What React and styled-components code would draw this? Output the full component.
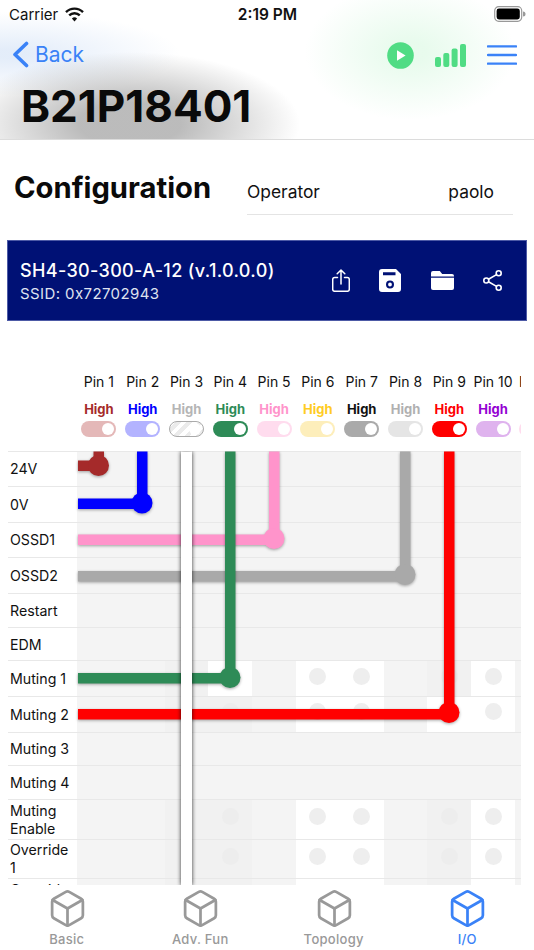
import React from 'react'
import styled, { createGlobalStyle } from 'styled-components'
import { Box } from 'lucide-react'

const GlobalStyle = createGlobalStyle`
  html, body {
    margin: 0;
    padding: 0;
    background: #fff;
    font-family: Inter, "Liberation Sans", sans-serif;
    color: #111;
  }
  * {
    box-sizing: border-box;
  }
`

const BLUE = '#3a82f7'
const GREEN = '#50dc84'
const COL = 43.8

const Page = styled.div`
  width: 534px;
  height: 950px;
  display: flex;
  flex-direction: column;
  overflow: hidden;
  background: #fff;
`

const Main = styled.div`
  flex: 1;
  min-height: 0;
  overflow: hidden;
`

const Header = styled.header`
  height: 140px;
  border-bottom: 1px solid #dcdcdc;
  background:
    radial-gradient(ellipse 170px 72px at 130px 124px, rgba(165, 165, 165, 0.75) 30%, rgba(165, 165, 165, 0) 100%),
    radial-gradient(ellipse 105px 68px at 410px 52px, rgba(200, 245, 212, 0.42) 15%, rgba(200, 245, 212, 0) 100%),
    radial-gradient(ellipse 170px 42px at 10px 54px, rgba(205, 222, 245, 0.55) 10%, rgba(205, 222, 245, 0) 100%),
    #fff;
`

const StatusBar = styled.div`
  height: 28px;
  display: grid;
  grid-template-columns: 1fr auto 1fr;
  align-items: center;
  padding: 0 8px 0 9px;
  font-size: 15px;
`

const Carrier = styled.div`
  display: flex;
  align-items: center;
  gap: 7px;
`

const Clock = styled.div`
  font-size: 15.5px;
  font-weight: 600;
`

const BatteryWrap = styled.div`
  justify-self: end;
  display: flex;
`

const NavRow = styled.div`
  height: 52px;
  display: flex;
  align-items: center;
  padding: 0 17px 0 12px;
`

const BackLink = styled.div`
  display: flex;
  align-items: center;
  gap: 6px;
  color: ${BLUE};
  font-size: 21px;
`

const NavIcons = styled.div`
  margin-left: auto;
  padding-top: 2px;
  display: flex;
  align-items: center;
`

const Title = styled.h1`
  margin: 0 0 0 21px;
  font-size: 44px;
  line-height: 52px;
  font-weight: 700;
  color: #0a0a0a;
`

const ConfigRow = styled.section`
  height: 100px;
  display: flex;
  align-items: flex-start;
  padding-left: 14px;
`

const ConfigTitle = styled.h2`
  margin: 28px 0 0;
  width: 197px;
  font-size: 29.2px;
  line-height: 40px;
  font-weight: 700;
  white-space: nowrap;
  color: #0a0a0a;
`

const Operator = styled.div`
  margin: 35px 0 0 36px;
  width: 266px;
  height: 40px;
  display: flex;
  align-items: center;
  justify-content: space-between;
  padding: 0 19px 7px 0;
  border-bottom: 1px solid #e4e4e4;
  font-size: 17.4px;
  font-weight: 400;
`

const Banner = styled.section`
  margin: 0 7px;
  height: 81px;
  display: flex;
  align-items: center;
  padding: 0 24px 0 12px;
  background: #001175;
  border: 1px solid #4d5aa6;
  color: #fff;
`

const BannerText = styled.div`
  flex: 1;
  padding-top: 3px;
`

const BannerTitle = styled.div`
  font-size: 18px;
  line-height: 24px;
  font-weight: 500;
  letter-spacing: 0.35px;
  white-space: nowrap;
`

const BannerSub = styled.div`
  font-size: 15px;
  line-height: 22px;
  letter-spacing: 0.4px;
  color: #dfe2f0;
`

const BannerIcons = styled.div`
  display: flex;
  align-items: center;
  gap: 29.5px;
`

const PinHead = styled.div`
  margin-left: 8px;
  width: 513px;
  height: 129.5px;
  padding: 52px 0 0 69px;
  display: flex;
  overflow: hidden;
`

const PinCol = styled.div`
  flex: 0 0 ${COL}px;
  display: flex;
  flex-direction: column;
  align-items: center;
`

const PinName = styled.div`
  font-size: 14px;
  line-height: 18px;
  white-space: nowrap;
`

const PinLevel = styled.div`
  margin-top: 9px;
  font-size: 13px;
  line-height: 18px;
  font-weight: 700;
  color: ${(p) => p.$color};
`

const Toggle = styled.div`
  margin-top: 3px;
  width: 35px;
  height: 16px;
  flex: none;
  display: flex;
  align-items: center;
  justify-content: flex-end;
  padding-right: 2px;
  border-radius: 8px;
  background: ${(p) => p.$track};
  ${(p) =>
    p.$disabled &&
    `
    border: 1.5px solid #aaa;
    background: repeating-linear-gradient(135deg, #fff 0 4px, #ebebeb 4px 8px);
  `}
`

const Knob = styled.div`
  width: 12px;
  height: 12px;
  border-radius: 50%;
  background: #fff;
`

const Grid = styled.div`
  position: relative;
  margin-left: 8px;
  width: 513px;
  overflow: hidden;
`

const Row = styled.div`
  height: ${(p) => p.$height}px;
  display: flex;
  border-top: 1.5px solid #e8e8e8;
  background: #f4f4f4;
`

const RowLabel = styled.div`
  flex: 0 0 69px;
  display: flex;
  align-items: center;
  padding: 1px 0 0 2px;
  background: #fff;
  font-size: 14.2px;
  line-height: 18px;
`

const Cell = styled.div`
  flex: 0 0 ${COL}px;
  display: flex;
  align-items: center;
  justify-content: center;
  padding-bottom: 5px;
  background: ${(p) => (p.$tone === 'white' ? '#fff' : p.$tone === 'dim' ? '#f1f1f1' : 'transparent')};
`

const Dot = styled.div`
  width: 17px;
  height: 17px;
  border-radius: 50%;
  background: ${(p) => (p.$tone === 'white' ? '#eeeeee' : '#ededed')};
`

const WireLayer = styled.svg`
  position: absolute;
  left: 0;
  top: 0;
  pointer-events: none;
`

const WireGroup = styled.g`
  filter: drop-shadow(0 1px 1.5px rgba(0, 0, 0, 0.35));
`

const DisabledBar = styled.rect`
  fill: #fff;
  filter: drop-shadow(0 0 2px rgba(0, 0, 0, 0.8));
`

const TabBar = styled.nav`
  height: 65px;
  flex: none;
  display: flex;
  background: #fff;
`

const Tab = styled.div`
  flex: 1;
  display: flex;
  flex-direction: column;
  align-items: center;
  color: ${(p) => (p.$active ? BLUE : '#999')};
  font-size: 13px;
  font-weight: 500;
  letter-spacing: 0.3px;
`

const TabIcon = styled(Box)`
  margin: 3px 0 0 1px;
  height: 41px;
  flex: none;
`

const TabLabel = styled.span`
  line-height: 16px;
  margin-top: 2px;
`

const pins = [
  { name: 'Pin 1', color: '#a52a2a', track: '#e4b8b8' },
  { name: 'Pin 2', color: '#0000ff', track: '#b3b3ff' },
  { name: 'Pin 3', color: '#b5b5b5', disabled: true },
  { name: 'Pin 4', color: '#2e8b57', track: '#2e8b57' },
  { name: 'Pin 5', color: '#ff94cb', track: '#ffdcee' },
  { name: 'Pin 6', color: '#ffcc22', track: '#fdeebb' },
  { name: 'Pin 7', color: '#111111', track: '#aaaaaa' },
  { name: 'Pin 8', color: '#b0b0b0', track: '#e5e5e5' },
  { name: 'Pin 9', color: '#ff0000', track: '#ff0000' },
  { name: 'Pin 10', color: '#9400d3', track: '#dfb3ee' },
  { name: 'Pin 11', color: '#ff94cb', track: '#ffdcee' },
]

// w = white cell, g = dimmed cell, a trailing d means it holds a dot
const safety = { 2: 'g', 3: 'gd', 5: 'wd', 6: 'wd', 8: 'gd', 9: 'wd' }

const rows = [
  { label: '24V', height: 35.5 },
  { label: '0V', height: 35.7 },
  { label: 'OSSD1', height: 35.6 },
  { label: 'OSSD2', height: 36 },
  { label: 'Restart', height: 33.7 },
  { label: 'EDM', height: 33.3 },
  { label: 'Muting 1', height: 35.7, cells: { 2: 'g', 3: 'w', 5: 'wd', 6: 'wd', 8: 'gd', 9: 'wd' } },
  { label: 'Muting 2', height: 35.7, cells: { 2: 'g', 3: 'gd', 5: 'wd', 6: 'wd', 8: 'w', 9: 'wd' } },
  { label: 'Muting 3', height: 33.3 },
  { label: 'Muting 4', height: 34 },
  { label: 'Muting Enable', height: 39.7, cells: safety },
  { label: 'Override 1', height: 39.3, cells: safety },
  { label: 'Override 2', height: 40, cells: safety },
]

// drawn in page coordinates, the layer's viewBox starts at the grid's corner
const wires = [
  { color: '#a52a2a', x: 98.5, fromY: 451, y: 465, dot: [98.5, 465] },
  { color: '#ff94cb', x: 274, fromY: 451, y: 539, dot: [274, 538] },
  { color: '#a9a9a9', x: 405, fromY: 451, y: 575.5, dot: [405, 574] },
  { color: '#0000ff', x: 142, fromY: 451, y: 503, dot: [142, 502.5] },
  { color: '#2e8b57', x: 230, fromY: 451, y: 677.5, dot: [230, 677] },
  { color: '#ff0000', x: 449, fromY: 451, y: 713.5, dot: [449, 712] },
]

const WifiIcon = () => (
  <svg width="19" height="15" viewBox="0 0 19 15" fill="none" stroke="#111" strokeWidth="2.4">
    <path d="M1 5.2a12 12 0 0 1 17 0" />
    <path d="M4.2 8.4a7.5 7.5 0 0 1 10.6 0" />
    <path d="M9.5 14.5l-2.6-3a3.6 3.6 0 0 1 5.2 0z" fill="#111" stroke="none" />
  </svg>
)

const BatteryIcon = () => (
  <svg width="32" height="16" viewBox="0 0 32 16">
    <rect x="0.7" y="0.7" width="27" height="14.6" rx="4" fill="none" stroke="#999" strokeWidth="1.2" />
    <rect x="2.6" y="2.6" width="23.2" height="10.8" rx="2.4" fill="#000" />
    <path d="M29 5.5a2.5 2.5 0 0 1 0 5z" fill="#999" />
  </svg>
)

const Chevron = () => (
  <svg width="17" height="27" viewBox="0 0 17 27" fill="none" stroke={BLUE} strokeWidth="3.6" strokeLinecap="round" strokeLinejoin="round">
    <path d="M14.5 2.5L3 13.5l11.5 11" />
  </svg>
)

const PlayIcon = () => (
  <svg width="27" height="27" viewBox="0 0 27 27">
    <circle cx="13.5" cy="13.5" r="13.3" fill={GREEN} />
    <path d="M10 8.2l8.6 5.3-8.6 5.3z" fill="#fff" />
  </svg>
)

const SignalIcon = () => (
  <svg width="31" height="23" viewBox="0 0 31 23" fill={GREEN} style={{ marginLeft: 21 }}>
    <rect x="0" y="13" width="6" height="10" rx="2" />
    <rect x="8.3" y="9" width="6" height="14" rx="2" />
    <rect x="16.6" y="4.5" width="6" height="18.5" rx="2" />
    <rect x="25" y="0" width="6" height="23" rx="2" />
  </svg>
)

const MenuIcon = () => (
  <svg width="30" height="20" viewBox="0 0 30 20" stroke={BLUE} strokeWidth="2.4" strokeLinecap="round" style={{ marginLeft: 21 }}>
    <path d="M1 1.4h28M1 10h28M1 18.6h28" />
  </svg>
)

const UploadIcon = () => (
  <svg width="18" height="23" viewBox="0 0 18 23" fill="none" stroke="#fff" strokeWidth="1.5" strokeLinecap="round" strokeLinejoin="round">
    <path d="M5.5 8.5H2.7a2 2 0 0 0-2 2v9.8a2 2 0 0 0 2 2h12.6a2 2 0 0 0 2-2v-9.8a2 2 0 0 0-2-2h-2.8" />
    <path d="M9 15V1.2M5.2 4.8L9 1l3.8 3.8" />
  </svg>
)

const SaveIcon = () => (
  <svg width="22" height="23" viewBox="0 0 22 23">
    <path fillRule="evenodd" fill="#fff" d="M3 0h14l5 5v15a3 3 0 0 1-3 3H3a3 3 0 0 1-3-3V3a3 3 0 0 1 3-3zM4 3.2v3h12.5v-3zM11 11.5a4 4 0 1 0 0 8 4 4 0 0 0 0-8zM11 13.6a1.9 1.9 0 1 1 0 3.8 1.9 1.9 0 0 1 0-3.8z" />
  </svg>
)

const FolderIcon = () => (
  <svg width="23" height="19" viewBox="0 0 23 19" fill="#fff">
    <path d="M2 0h6.8l2.4 3H21a2 2 0 0 1 2 2v.6H0V2a2 2 0 0 1 2-2z" />
    <path d="M0 6.8h23V17a2 2 0 0 1-2 2H2a2 2 0 0 1-2-2z" />
  </svg>
)

const NodesIcon = () => (
  <svg width="19" height="21" viewBox="0 0 19 21" fill="none" stroke="#fff" strokeWidth="1.6">
    <circle cx="3.3" cy="10.5" r="2.5" />
    <circle cx="15.7" cy="3.3" r="2.5" />
    <circle cx="15.7" cy="17.7" r="2.5" />
    <path d="M5.5 9.2l8-4.6M5.5 11.8l8 4.6" />
  </svg>
)

const cellTone = (kind) => (kind ? (kind[0] === 'w' ? 'white' : 'dim') : undefined)

const WireLines = () => (
  <WireLayer width="513" height="435" viewBox="8 450.5 513 435">
    {wires.map((w) => (
      <WireGroup key={w.color}>
        <rect x="78" y={w.y - 5} width={w.x - 78} height="10.5" fill={w.color} />
        <rect x={w.x - 5} y={w.fromY} width="10.5" height={w.y - w.fromY} fill={w.color} />
        <circle cx={w.dot[0]} cy={w.dot[1]} r="10.5" fill={w.color} />
      </WireGroup>
    ))}
    <DisabledBar x="181" y="451" width="11" height="434" />
  </WireLayer>
)

export default function App() {
  return (
    <Page>
      <GlobalStyle />
      <Main>
        <Header>
          <StatusBar>
            <Carrier>
              Carrier
              <WifiIcon />
            </Carrier>
            <Clock>2:19 PM</Clock>
            <BatteryWrap>
              <BatteryIcon />
            </BatteryWrap>
          </StatusBar>
          <NavRow>
            <BackLink>
              <Chevron />
              Back
            </BackLink>
            <NavIcons>
              <PlayIcon />
              <SignalIcon />
              <MenuIcon />
            </NavIcons>
          </NavRow>
          <Title>B21P18401</Title>
        </Header>

        <ConfigRow>
          <ConfigTitle>Configuration</ConfigTitle>
          <Operator>
            <span>Operator</span>
            <span>paolo</span>
          </Operator>
        </ConfigRow>

        <Banner>
          <BannerText>
            <BannerTitle>SH4-30-300-A-12 (v.1.0.0.0)</BannerTitle>
            <BannerSub>SSID: 0x72702943</BannerSub>
          </BannerText>
          <BannerIcons>
            <UploadIcon />
            <SaveIcon />
            <FolderIcon />
            <NodesIcon />
          </BannerIcons>
        </Banner>

        <PinHead>
          {pins.map((pin) => (
            <PinCol key={pin.name}>
              <PinName>{pin.name}</PinName>
              <PinLevel $color={pin.color}>High</PinLevel>
              <Toggle $track={pin.track} $disabled={pin.disabled}>
                <Knob />
              </Toggle>
            </PinCol>
          ))}
        </PinHead>

        <Grid>
          {rows.map((row) => (
            <Row key={row.label} $height={row.height}>
              <RowLabel>{row.label}</RowLabel>
              {pins.map((pin, i) => {
                const kind = row.cells && row.cells[i]
                const tone = cellTone(kind)
                return (
                  <Cell key={pin.name} $tone={tone}>
                    {kind && kind[1] === 'd' && <Dot $tone={tone} />}
                  </Cell>
                )
              })}
            </Row>
          ))}
          <WireLines />
        </Grid>
      </Main>

      <TabBar>
        {['Basic', 'Adv. Fun', 'Topology', 'I/O'].map((tab) => (
          <Tab key={tab} $active={tab === 'I/O'}>
            <TabIcon size={41} strokeWidth={1.6} />
            <TabLabel>{tab}</TabLabel>
          </Tab>
        ))}
      </TabBar>
    </Page>
  )
}
